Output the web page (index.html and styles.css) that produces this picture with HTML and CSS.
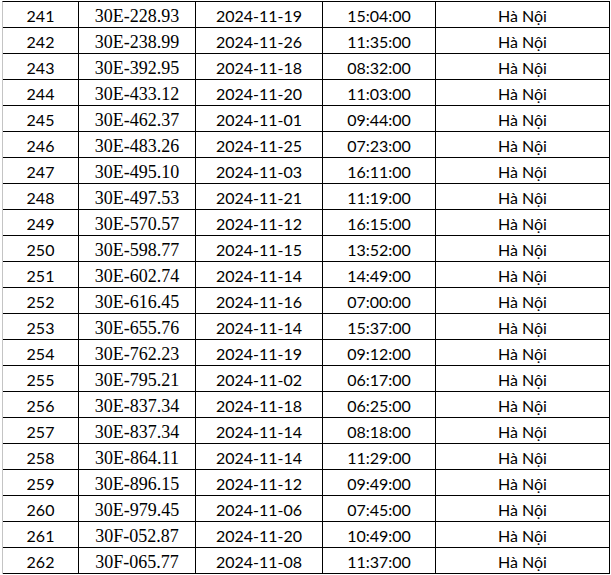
FILE: index.html
```html
<!DOCTYPE html>
<html lang="vi">
<head>
<meta charset="utf-8">
<title>Danh sách</title>
<link rel="stylesheet" href="styles.css">
</head>
<body>
<div class="sheet">
<div class="c n">241</div><div class="c p">30E-228.93</div><div class="c d">2024-11-19</div><div class="c t">15:04:00</div><div class="c l">Hà Nội</div>
<div class="c n">242</div><div class="c p">30E-238.99</div><div class="c d">2024-11-26</div><div class="c t">11:35:00</div><div class="c l">Hà Nội</div>
<div class="c n">243</div><div class="c p">30E-392.95</div><div class="c d">2024-11-18</div><div class="c t">08:32:00</div><div class="c l">Hà Nội</div>
<div class="c n">244</div><div class="c p">30E-433.12</div><div class="c d">2024-11-20</div><div class="c t">11:03:00</div><div class="c l">Hà Nội</div>
<div class="c n">245</div><div class="c p">30E-462.37</div><div class="c d">2024-11-01</div><div class="c t">09:44:00</div><div class="c l">Hà Nội</div>
<div class="c n">246</div><div class="c p">30E-483.26</div><div class="c d">2024-11-25</div><div class="c t">07:23:00</div><div class="c l">Hà Nội</div>
<div class="c n">247</div><div class="c p">30E-495.10</div><div class="c d">2024-11-03</div><div class="c t">16:11:00</div><div class="c l">Hà Nội</div>
<div class="c n">248</div><div class="c p">30E-497.53</div><div class="c d">2024-11-21</div><div class="c t">11:19:00</div><div class="c l">Hà Nội</div>
<div class="c n">249</div><div class="c p">30E-570.57</div><div class="c d">2024-11-12</div><div class="c t">16:15:00</div><div class="c l">Hà Nội</div>
<div class="c n">250</div><div class="c p">30E-598.77</div><div class="c d">2024-11-15</div><div class="c t">13:52:00</div><div class="c l">Hà Nội</div>
<div class="c n">251</div><div class="c p">30E-602.74</div><div class="c d">2024-11-14</div><div class="c t">14:49:00</div><div class="c l">Hà Nội</div>
<div class="c n">252</div><div class="c p">30E-616.45</div><div class="c d">2024-11-16</div><div class="c t">07:00:00</div><div class="c l">Hà Nội</div>
<div class="c n">253</div><div class="c p">30E-655.76</div><div class="c d">2024-11-14</div><div class="c t">15:37:00</div><div class="c l">Hà Nội</div>
<div class="c n">254</div><div class="c p">30E-762.23</div><div class="c d">2024-11-19</div><div class="c t">09:12:00</div><div class="c l">Hà Nội</div>
<div class="c n">255</div><div class="c p">30E-795.21</div><div class="c d">2024-11-02</div><div class="c t">06:17:00</div><div class="c l">Hà Nội</div>
<div class="c n">256</div><div class="c p">30E-837.34</div><div class="c d">2024-11-18</div><div class="c t">06:25:00</div><div class="c l">Hà Nội</div>
<div class="c n">257</div><div class="c p">30E-837.34</div><div class="c d">2024-11-14</div><div class="c t">08:18:00</div><div class="c l">Hà Nội</div>
<div class="c n">258</div><div class="c p">30E-864.11</div><div class="c d">2024-11-14</div><div class="c t">11:29:00</div><div class="c l">Hà Nội</div>
<div class="c n">259</div><div class="c p">30E-896.15</div><div class="c d">2024-11-12</div><div class="c t">09:49:00</div><div class="c l">Hà Nội</div>
<div class="c n">260</div><div class="c p">30E-979.45</div><div class="c d">2024-11-06</div><div class="c t">07:45:00</div><div class="c l">Hà Nội</div>
<div class="c n">261</div><div class="c p">30F-052.87</div><div class="c d">2024-11-20</div><div class="c t">10:49:00</div><div class="c l">Hà Nội</div>
<div class="c n">262</div><div class="c p">30F-065.77</div><div class="c d">2024-11-08</div><div class="c t">11:37:00</div><div class="c l">Hà Nội</div>
</div>
</body>
</html>
```
FILE: styles.css
```css
html, body {
  margin: 0;
  padding: 0;
  background: #ffffff;
}

.sheet {
  margin: 1px 0 0 2px;
  width: 608px;
  box-sizing: border-box;
  display: grid;
  grid-template-columns: 76px 117px 127px 113px 174px;
  grid-auto-rows: 26px;
  border-left: 1px solid #c4c4c4;
  border-top: 1px solid #000;
}

.c {
  box-sizing: border-box;
  border-right: 1px solid #000;
  border-bottom: 1px solid #000;
  display: flex;
  align-items: flex-end;
  justify-content: center;
  padding-bottom: 1px;
  line-height: 20px;
  color: #000;
  font-family: Lato, "Liberation Sans", sans-serif;
  font-size: 16px;
  white-space: nowrap;
}

.p {
  font-family: "Liberation Serif", serif;
  font-size: 18px;
}
```
